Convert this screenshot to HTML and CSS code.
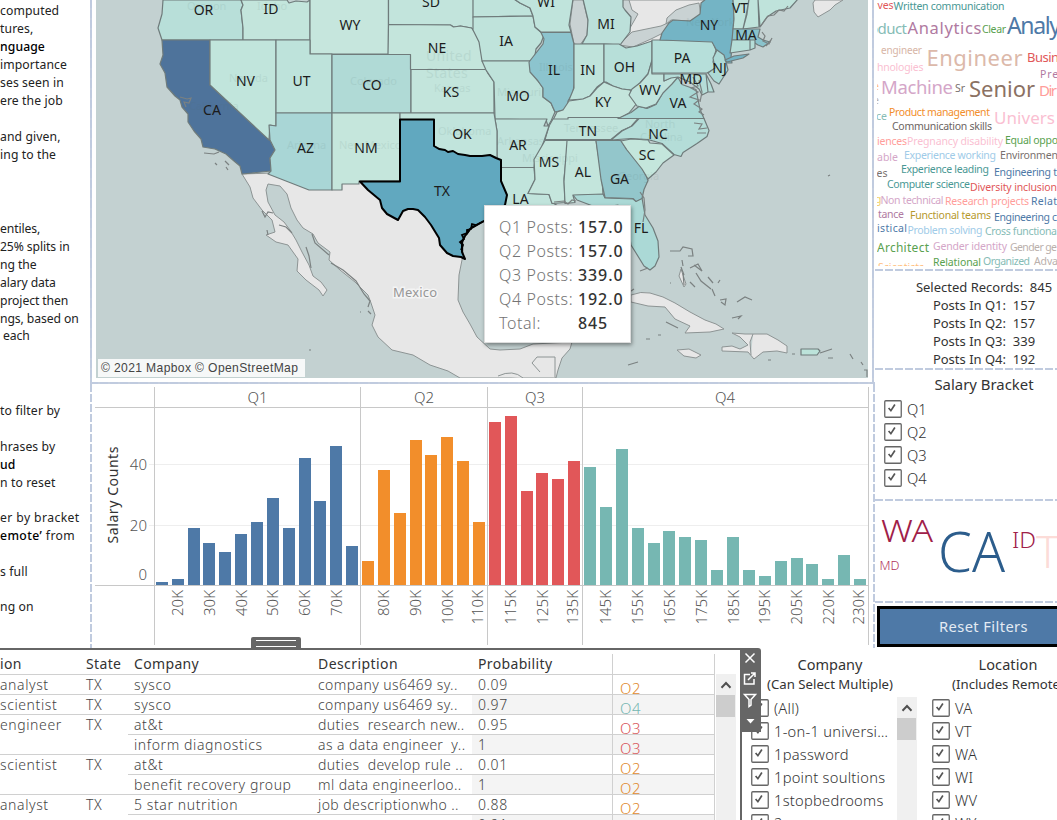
FILE: index.html
```html
<!DOCTYPE html>
<html lang="en">
<head>
<meta charset="utf-8">
<title>Job Posts Dashboard</title>
<link rel="stylesheet" href="styles.css">
</head>
<body>
<svg class="defs" width="0" height="0" aria-hidden="true">
  <symbol id="box" viewBox="0 0 18 18"><rect x=".75" y=".75" width="16.5" height="16.5" rx="1" fill="#fff" stroke="#666" stroke-width="1.3"/><path d="M4.600 8l2.300 2.700 4-6.200" fill="none" stroke="#555" stroke-width="1.7"/></symbol>
  <symbol id="up" viewBox="0 0 12 8"><path d="M1.5 6.7L6 2l4.500 4.700" fill="none" stroke="#505050" stroke-width="2"/></symbol>
</svg>
<div class="dashboard">
  <aside class="notes">
    <p>computed<br>tures,<br><b>nguage</b><br>importance<br>ses seen in<br>ere the job</p>
    <p class="n2">and given,<br>ing to the</p>
    <p class="n3">entiles,<br>25% splits in<br>ng the<br>alary data<br>project then<br>ngs, based on<br>&nbsp;each</p>
    <p class="n4">to filter by</p>
    <p class="n5">hrases by<br><b>ud</b><br>n to reset</p>
    <p class="n5 wide">er by bracket<br><b>emote’</b> from</p>
    <p class="n5">s full</p>
    <p class="n5">ng on</p>
  </aside>

  <main class="center">
    <section class="map-panel">
      <svg class="map" viewBox="96 0 772 378">
        <rect x="96" width="772" height="378" fill="#c3d1d1"/>
        <g class="land">
          <path d="M242 174l8 13 3 11 9 12 10 10 3 12-9 3 10 7 12 3 10 14-1 12 9 9 13 10 4 6 4-6-6-8-8-6-4-11-7-13-6-12-6-10-6-8-9-7-7-13-2-12 2-6 12 2 7 8 4 14 6 12 6 8 10 6 5 9 12 9-1 8 11 10 15 12 13 13 3 8 4 12-3 10 6 12 14 13 21 5 17 10 18 6 12 7h96l2-8 4-12 8-9 2-7-39 2-13 5-20 1-10-1-13-12-7-13-7-12-5-12 1-25 4-20 1-80-130-4z"/>
          <path d="M532 363l5-6h18v21M532 363l8 9M498 376q15-7 25 2"/>
          <path d="M590 0h144v20l-34 25h-96l-17-3z"/>
          <path d="M631 295q10-4 19-2l13 4 12 6 15 9 15 8 11 4 8 5-14 3-25 1 5-7-15-7-10-12-17-1-17-4z"/>
          <path d="M732 333l13 1 8 0 14 0 11 6 9 6v7l-10-2-14 1-9 7-6-7-26-1v-4l10-1 8 3 8-4-8-8zM677 350l12-1 12 6-5 3-12-2zM753 334l-3 8 1 13"/>
          <path d="M813 3l1 9 4 5 12-7 5-5 8-5h-28z"/>
          <path d="M679 276l2-7 2 6 3 9-2 3z"/>
        </g>
        <g class="lake">
          <path d="M573 0l-3 24 4 20 6 1 7-10 1-14-5-21z"/>
          <path d="M615 0l1 11 10 3 4 14 8-14-6-4-3-10z"/>
          <path d="M619 45l13-13 29-6 9-4-7 11-12 6-18 8z"/>
          <path d="M667 18l9-8 13-5 10-2 2 12-11 6-19-1-5 4z"/>
        </g>
        <g class="state">
          <path fill="#b8dfd9" d="M163 0l-1 14-4 14 4 12h81V28l-2-18 2-5-2-5z"/>
          <path fill="#c3e5dc" d="M241 0l2 5-2 5 2 18v12h67V0l-3 2-11-1-7 2-2-3z"/>
          <path fill="#c6e6dd" d="M310-1v55h78.500v-55z"/>
          <path fill="#4e739b" d="M162 40h48v45l60 55 5 10-5 8 1 13-29 3-2-8-6-5-8-7-11-5-12-2-2-8-7-8-6-9v-8l-6-7-2-7-5-4-8-9-2-14-5-9 3-9z"/>
          <path fill="#c1e5dc" d="M210 40h66v86l-6-1-1 15-59-55z"/>
          <path fill="#bee3db" d="M276 40h34v14h22v59h-56z"/>
          <path fill="#b0dad6" d="M332 54.500h79V113h-79z"/>
          <path fill="#a9d6d6" d="M276 113h56v77h-23l-41-16 3-3-1-13 5-8-5-10-1-15 7 1z"/>
          <path fill="#c5e6dc" d="M332 113h68v68h-41v3h-17v6h-10z"/>
          <path fill="#c2e4dc" d="M388.500-1v25.500l62 .5 3 2 7-1 11 2 3 3-1-13v-20z"/>
          <path fill="#bfe3db" d="M473-1v18l60-1-3-8-10-5-6-4z"/>
          <path fill="#c4e5dc" d="M388.500 24.500l62 .5 3 2 7-1 11 2 4 5 4 9 3 13 4 10 3 4.500h-79V54.500h-22.500z"/>
          <path fill="#bfe3db" d="M473 17l60-1 2 11 9 8-3 8-5 6-2 12H482l-3-19-6-12z"/>
          <path fill="#c3e5dc" d="M411 69.500h75l2 4 6 8.500v31h-83z"/>
          <path fill="#bee2da" d="M482 61h48l1 10 7 10 5 7v9l8 6 4 9-4 9-3 5-2-6-51-1-1-37-8-12z"/>
          <path fill="#c0e4dc" d="M514-1l6 4 10 5 3 8 2 11 6 5h30l-2-7 4-26z"/>
          <path fill="#8cc4ce" d="M541 32.500h30l3 11.500v40l-1 9-5 8-1 8-12 3-4-9-8-6v-9l-5-7-8-9-1-10 7-9 7-9 1-5z"/>
          <path fill="#bce0da" d="M583-1l5 21-1 15-5 9h24l14 1 10-13 1-15-6-7-2-3 0-8z"/>
          <path fill="#bfe3db" d="M574 44h30v38l-7 5-7 9-7 3-14 1 5-12z"/>
          <path fill="#b7dfd9" d="M604 44h15l7 4 11-2 15-5v20l-4 13-8 9-8 7-10-1-9-3-7-4h-2z"/>
          <path fill="#c4e5dc" d="M569 101l14-2 7-3 7-8 7-6 9 4 9 3 8 1 7 13-8 10-11 6-65 1 4-8 6-2z"/>
          <path fill="#c0e3db" d="M549 126l4-7h15v-1.500h71l-8 9-9 4-11 9h-66z"/>
          <path fill="#bfe2db" d="M495 119h52l-3 7h5l-8 24-6 10-1 7.500h-33v-7l-4-2V131z"/>
          <path fill="#c1e4dc" d="M494 113h-94v6.500h34V146l11 5 13 4 24 1 8-1 7 3v-27z"/>
          <path fill="#c1e4dc" d="M501 167.500h33l1 12-7 14 21 1 3 8 7 4v18h-59l6-29-6-15z"/>
          <path fill="#c5e6dd" d="M545 140.500h23l-4 38 1 24-13 1-3-9-21-1 7-14-1-20z"/>
          <path fill="#c3e5dc" d="M567 140.500h29l6 38 1 16-30 1 2 7-10 1-1-22z"/>
          <path fill="#abd9d6" d="M573 195l30-1 2 4 28 1 3 2 6-3 3 17 8 13 5 13 1 16-4 9-5 4-6-4-8-13-5-8-3-20-10-20-20 3-21-8z"/>
          <path fill="#93c6cb" d="M596 140.500h25l5 8 13 14 7 13 2 5-4 9-2 9-6 3-3-3-28-1-4-18z"/>
          <path fill="#b4ddd8" d="M611 140l11-9 10-5 7-7.500h65l5 12-2 6-10 7-14 9-2 4-7-2-12-11-14-4-17-1z"/>
          <path fill="#c4e6dc" d="M621 141l10-2 17 1 2 3 12 1 12 11-11 8-7 9-8 7-6-10-15-19z"/>
          <path fill="#a9d8d5" d="M618 118.500l13-6 8-6 8 2 9-4 7-12 8-11 7-4 4 7 14 5 4 20 4 9z"/>
          <path fill="#c0e3dc" d="M652 60v14h12v7l8-4 6 0-6 7-9 9-7 11-10 4-9-2-8-11 3-6 8-6 8-9z"/>
          <path fill="#b5ddd8" d="M664 74h42l2 18-6 3-3-6-9-7-12-5-7 1-7 3zM706 74l2 18h6l-3-8z"/>
          <path fill="#b6dfda" d="M652 40h60l4 10-3 12 3 6-9 5h-55z"/>
          <path fill="#74b4c5" d="M660 40l2-7 7-10 4-3 17 1 10-7 1-11 5-4h27l1 20-3 39 1 5-7 0-1-7-7-5-5-9z"/>
          <path fill="#addad6" d="M717 50l7 5 2 7 2 8-9 14-5-3-6-8 7-5-2-10z"/>
          <path fill="#bfe3db" d="M733-1l1 20-1 10h10l3-13 3-17zM749-1l-2 15-4 15 16-2-1-28zM758-1l2 28 7-10 9-6 14-3 8-9z"/>
          <path fill="#8ac3cc" d="M733 29h27l-2 8 5 3 7 2-7 5-5-2-8-5h-18z"/>
          <path fill="#b6ded8" d="M732 40h18v10l-20 3zM750 40h5v8l-5 2z"/>
          <path fill="#74b4c5" d="M725 60l9-4 15-2-6 4-16 4z"/>
          <path fill="#bce3da" d="M801 349h17l2 2-3 4h-16z"/>
        </g>
        <g class="coast">
          <path d="M180 97l7 2 4-1-2 5-5-1 2 5M204 153l10 1 5-2M215 163l2 2M225 161l4 4M226 167l2 3M693 77l5 9-7 2 7 4-8 5 9 3-5 4 8 5-3 3 5 3M699 80l3 12-2 10M694 123l8 1-3 5 8-1M697 133l9 0M762 32l3 4-2 5 6 3 3-6M771 40l-5 6M760 27l8-11 6-1 5-5 5 1 4-5M554 202l10-1 4 3 4-4 4 1M640 192l4 6 1 12-2 12M628 293l6-4M262 211l3 6 3-5 5 1M312 234l3 9 14 12M331 263l12 7 13 11 8 13 6 7-2 6M279 225l7 2 6 6M306 247l3 9 2 12M368 311l3 3M309 350h2M360 312h1M267 230l1 5"/>
          <path d="M670 251l10 0 3-4 9 2 1 7-5 0M682 260l1 6M690 268l8-4 4 7-8-6M696 273l5 8 10 8M708 277l5 6M718 283l2-3M720 300l6-1-1 6-4-3M737 302l8-5 7 3M732 318l9-2-3 3M690 282l5 5M712 289l3 7M666 322l12 6M646 339h4M658 335h3M792 354h3M820 353l12-4M828 358h5M850 354l3 5M861 362l2 3M864 370h3v7M681 267l3 8M683 273l1 12M828 176l2-1M640 271l8-3M670 283h1M768 360h3M628 365l10-3"/>
        </g>
        <g class="ghost"><text x="187" y="10">Oregon</text><text x="257" y="10">Idaho</text><text x="229" y="82">Nevada</text><text x="189" y="110">California</text><text x="287" y="149">Arizona</text><text x="350" y="85">Colorado</text><text x="339" y="149">New Mexico</text><text x="434" y="92">Kansas</text><text x="438" y="135">Oklahoma</text><text x="497" y="145">Arkansas</text><text x="522" y="162">Mississippi</text><text x="539" y="71">Illinois</text><text x="564" y="132">Tennessee</text><text x="686" y="26">New York</text><text x="645" y="128">North</text><text x="640" y="141">Carolina</text><text x="497" y="96">Missouri</text><text x="618" y="180">Georgia</text><text x="426" y="61" class="country">United</text><text x="426" y="78" class="country">States</text></g>
        <path class="texas" d="M400 119.500H434V146L439 149 445 150 448 152 453 151 458 154 465 155 470 156 482 156 490 155 496 158 501 160V181L504 188 507 195 505 205 495 214 484 221 470 229 465 236 462 242 462 252 465 259 461 257 453 256 447 253 440 245 439 238 431 225 425 217 418 210 413 209 408 209 403 211 398 220 387 214 382 208 380 200 368 190 360 181.500H400z"/>
        <path class="bay" d="M484 221l-8 4-4-1-1 5-4 1 0 3-5 2 2 4-4 3 3 3-2 5M480 223l-9 5-5 7"/>
        <text class="mexico" x="393" y="296.500" textLength="44">Mexico</text>
        <g class="abbr">
          <text x="203.500" y="15">OR</text><text x="271" y="14">ID</text><text x="350" y="29.500">WY</text><text x="431" y="7">SD</text><text x="546" y="7">WI</text><text x="606" y="28.500">MI</text><text x="709" y="29.500">NY</text><text x="740" y="12.500">VT</text><text x="746" y="39.500">MA</text>
          <text x="437" y="53">NE</text><text x="506" y="46">IA</text><text x="554" y="75">IL</text><text x="588" y="75">IN</text><text x="624.500" y="72">OH</text><text x="682" y="63">PA</text><text x="719.500" y="73">NJ</text><text x="691" y="84">MD</text>
          <text x="245.500" y="86">NV</text><text x="301.500" y="86">UT</text><text x="372" y="90">CO</text><text x="451" y="97">KS</text><text x="518" y="101">MO</text><text x="603" y="107">KY</text><text x="650" y="95">WV</text><text x="678" y="108">VA</text>
          <text x="212" y="115">CA</text><text x="305.500" y="153">AZ</text><text x="366" y="153">NM</text><text x="462" y="139">OK</text><text x="518" y="150">AR</text><text x="588" y="136">TN</text><text x="658" y="139">NC</text><text x="647" y="160">SC</text>
          <text x="549" y="167">MS</text><text x="583" y="177">AL</text><text x="619.500" y="184">GA</text><text x="442" y="196">TX</text><text x="520.500" y="204">LA</text><text x="641" y="232.500">FL</text>
        </g>
      </svg>
      <div class="credit">© 2021 Mapbox © OpenStreetMap</div>
      <dl class="tooltip">
        <dt>Q1 Posts:</dt><dd>157.0</dd>
        <dt>Q2 Posts:</dt><dd>157.0</dd>
        <dt>Q3 Posts:</dt><dd>339.0</dd>
        <dt>Q4 Posts:</dt><dd>192.0</dd>
        <dt>Total:</dt><dd>845</dd>
      </dl>
    </section>
    <section class="chart-panel">
      <svg class="chart" viewBox="92 385 781 263">
        <path d="M149 464.500H868M149 525.500H868" stroke="#eee"/>
        <path fill="#4e79a7" d="M156 585v-3h12v3zM172 585v-6h12v6zM188 585v-57h12v57zM203 585v-42h12v42zM219 585v-33h12v33zM235 585v-51h12v51zM251 585v-63h12v63zM267 585v-87h12v87zM283 585v-57h12v57zM299 585V458h12v127zM314 585v-84h12v84zM330 585V446h12v139zM346 585v-39h12v39z"/>
        <path fill="#f28e2b" d="M362 585v-24h12v24zM378 585V470h12v115zM394 585v-72h12v72zM410 585V440h12v145zM425 585V455h12v130zM441 585V437h12v148zM457 585V461h12v124zM473 585v-63h12v63z"/>
        <path fill="#e15759" d="M489 585V422h12v163zM505 585V416h12v169zM521 585v-94h12v94zM536 585V473h12v112zM552 585V479h12v106zM568 585V461h12v124z"/>
        <path fill="#76b7b2" d="M584 585V467h12v118zM600 585v-78h12v78zM616 585V449h12v136zM632 585v-57h12v57zM648 585v-42h12v42zM663 585v-54h12v54zM679 585v-48h12v48zM695 585v-45h12v45zM711 585v-15h12v15zM727 585v-48h12v48zM743 585v-15h12v15zM759 585v-9h12v9zM775 585v-24h12v24zM791 585v-27h12v27zM806 585v-21h12v21zM822 585v-6h12v6zM838 585v-30h12v30zM854 585v-6h12v6z"/>
        <path d="M95 407.500H869M95 585.500H869M154.500 387V645M360.500 387V645M487.500 387V645M582.500 387V645M868.500 387V645" stroke="#c8c8c8"/>
        <g class="quarter"><text x="257.500" y="403">Q1</text><text x="424" y="403">Q2</text><text x="535" y="403">Q3</text><text x="725" y="403">Q4</text></g>
        <g class="ytick"><text x="147" y="470">40</text><text x="147" y="531">20</text><text x="147" y="580">0</text></g>
        <text class="ytitle" transform="translate(118 495) rotate(-90)" text-anchor="middle" textLength="97">Salary Counts</text>
        <g class="xtick">
          <text transform="translate(183 590) rotate(-90)">20K</text><text transform="translate(215 590) rotate(-90)">30K</text><text transform="translate(247 590) rotate(-90)">40K</text><text transform="translate(278 590) rotate(-90)">50K</text><text transform="translate(310 590) rotate(-90)">60K</text><text transform="translate(342 590) rotate(-90)">70K</text>
          <text transform="translate(389 590) rotate(-90)">80K</text><text transform="translate(421 590) rotate(-90)">90K</text><text transform="translate(453 590) rotate(-90)">100K</text><text transform="translate(483 590) rotate(-90)">110K</text>
          <text transform="translate(516 590) rotate(-90)">115K</text><text transform="translate(548 590) rotate(-90)">125K</text><text transform="translate(578 590) rotate(-90)">135K</text>
          <text transform="translate(611 590) rotate(-90)">145K</text><text transform="translate(643 590) rotate(-90)">155K</text><text transform="translate(675 590) rotate(-90)">165K</text><text transform="translate(707 590) rotate(-90)">175K</text><text transform="translate(739 590) rotate(-90)">185K</text><text transform="translate(770 590) rotate(-90)">195K</text><text transform="translate(802 590) rotate(-90)">205K</text><text transform="translate(834 590) rotate(-90)">220K</text><text transform="translate(864 590) rotate(-90)">230K</text>
        </g>
      </svg>
    </section>
  </main>

  <aside class="side">
    <svg class="words" viewBox="877 0 180 269">
      <g font-size="10.500">
        <text x="877.500" y="9" fill="#e15759" textLength="16">ves</text><text x="893.500" y="10" fill="#499894" textLength="111">Written communication</text>
        <text x="869" y="33.500" font-size="15" fill="#86bcb6" textLength="38">oduct</text><text x="907.500" y="34" font-size="16.500" fill="#b07aa1" textLength="74">Analytics</text><text x="982" y="33" fill="#59a14f" textLength="24">Clear</text><text x="1007" y="33.500" font-size="23" fill="#4e79a7" textLength="54">Analy</text>
        <text x="881" y="53.500" font-size="10" fill="#d7b5a6" textLength="41">engineer</text><text x="870" y="53.500" fill="#d7b5a6">a</text><text x="926.500" y="66" font-size="22" fill="#dcb9aa" textLength="96">Engineer</text><text x="1027" y="62" font-size="13" fill="#e15759" textLength="39">Busine</text>
        <text x="877" y="70.500" fill="#fabfd2" textLength="46.500">hnologies</text><text x="1040" y="77.500" fill="#b07aa1" textLength="24">Pres</text>
        <text x="873" y="90" fill="#ffbe7d">e</text><text x="881" y="93.500" font-size="18.500" fill="#d4a6c8" textLength="72">Machine</text><text x="955" y="92" fill="#79706e" textLength="10">Sr</text><text x="969" y="97" font-size="22" fill="#8b7163" textLength="66">Senior</text><text x="1039" y="96" font-size="15" fill="#ff9d9a" textLength="18">Dir</text>
        <text x="873" y="104" fill="#bab0ac">e</text><text x="876" y="119.500" fill="#86bcb6">ce</text><text x="889" y="115.500" fill="#f28e2b" textLength="101">Product management</text><text x="994" y="124" font-size="17" fill="#fabfd2" textLength="61">Univers</text>
        <text x="892" y="129.500" fill="#6b6462" textLength="100">Communication skills</text>
        <text x="877" y="144.500" fill="#ff9d9a" textLength="30">iences</text><text x="907" y="144.500" fill="#fabfd2" textLength="96">Pregnancy disability</text><text x="1005" y="143.500" fill="#59a14f" textLength="53">Equal oppo</text>
        <text x="877" y="161" fill="#d4a6c8" textLength="21">able</text><text x="904" y="158.500" fill="#a0cbe8" textLength="92">Experience working</text><text x="1000" y="158.500" fill="#79706e" textLength="58">Environmen</text>
        <text x="876.500" y="176.500" fill="#79706e">es</text><text x="901" y="172.500" fill="#499894" textLength="88">Experience leading</text><text x="994" y="175.500" fill="#4e79a7" textLength="63">Engineering t</text>
        <text x="887" y="187.500" fill="#499894" textLength="83">Computer science</text><text x="970" y="190.500" fill="#e15759" textLength="87">Diversity inclusion</text>
        <text x="875" y="203" fill="#f1ce63">g</text><text x="880.500" y="203.500" fill="#d4a6c8" textLength="63">Non technical</text><text x="945" y="204.500" fill="#ff9d9a" textLength="84">Research projects</text><text x="1031" y="204.500" fill="#4e79a7" textLength="26">Relat</text>
        <text x="878" y="217.500" fill="#b07aa1" textLength="26">tance</text><text x="910" y="218.500" fill="#b6992d" textLength="81">Functional teams</text><text x="994" y="220.500" fill="#4e79a7" textLength="63">Engineering c</text>
        <text x="877" y="231.500" fill="#4e79a7" textLength="30">istical</text><text x="907.500" y="234" fill="#a0cbe8" textLength="75">Problem solving</text><text x="985" y="234.500" fill="#86bcb6" textLength="72">Cross functiona</text>
        <text x="877" y="252" font-size="12" fill="#59a14f" textLength="52">Architect</text><text x="933" y="249.500" fill="#d4a6c8" textLength="74">Gender identity</text><text x="1010" y="250.500" fill="#bab0ac" textLength="47">Gender ge</text>
        <svg x="877" y="261" width="50" height="5"><text x="1" y="10" fill="#ffbe7d" textLength="46">Scientists</text></svg>
        <text x="933" y="265.500" fill="#59a14f" textLength="48">Relational</text><text x="983" y="264.500" fill="#86bcb6" textLength="47">Organized</text><text x="1034" y="264.500" fill="#bab0ac" textLength="24">Adva</text>
      </g>
    </svg>
    <div class="records">
      <div>Selected Records:&nbsp; 845</div><div>Posts In Q1:&nbsp; 157</div><div>Posts In Q2:&nbsp; 157</div><div>Posts In Q3:&nbsp; 339</div><div>Posts In Q4:&nbsp; 192</div>
    </div>
    <div class="bracket">
      <h2>Salary Bracket</h2>
      <label><svg><use href="#box"/></svg>Q1</label>
      <label><svg><use href="#box"/></svg>Q2</label>
      <label><svg><use href="#box"/></svg>Q3</label>
      <label><svg><use href="#box"/></svg>Q4</label>
    </div>
    <div class="places-wrap">
      <svg class="places" viewBox="875 501 182 100">
        <text x="881" y="542" font-size="31" fill="#a02048" textLength="52" lengthAdjust="spacingAndGlyphs">WA</text>
        <text x="879.500" y="570" font-size="13" fill="#b03058" textLength="20" lengthAdjust="spacingAndGlyphs">MD</text>
        <text x="938" y="572" font-size="56" fill="#2c5d8c" textLength="67" lengthAdjust="spacingAndGlyphs">CA</text>
        <text x="1012" y="548" font-size="22" fill="#a02048" textLength="24" lengthAdjust="spacingAndGlyphs">ID</text>
        <text x="1036" y="568" font-size="44" fill="#fcdcd8">T</text>
      </svg>
    </div>
    <div class="reset-wrap"><button class="reset">Reset Filters</button></div>
  </aside>
</div>

<div class="lower">
  <section class="details">
    <div class="handle"></div>
    <div class="grid">
      <div class="row head"><span>ion</span><span>State</span><span>Company</span><span>Description</span><span>Probability</span><span></span></div>
      <div class="row"><span>analyst</span><span>TX</span><span>sysco</span><span>company us6469 sy..</span><span>0.09</span><span class="q2">Q2</span></div>
      <div class="row alt"><span>scientist</span><span>TX</span><span>sysco</span><span>company us6469 sy..</span><span>0.97</span><span class="q4">Q4</span></div>
      <div class="row open"><span>engineer</span><span>TX</span><span>at&amp;t</span><span>duties&nbsp; research new..</span><span>0.95</span><span class="q3">Q3</span></div>
      <div class="row alt"><span></span><span></span><span>inform diagnostics</span><span>as a data engineer&nbsp; y..</span><span>1</span><span class="q3">Q3</span></div>
      <div class="row open"><span>scientist</span><span>TX</span><span>at&amp;t</span><span>duties&nbsp; develop rule ..</span><span>0.01</span><span class="q2">Q2</span></div>
      <div class="row alt"><span></span><span></span><span>benefit recovery group</span><span>ml data engineerloo..</span><span>1</span><span class="q2">Q2</span></div>
      <div class="row open"><span>analyst</span><span>TX</span><span>5 star nutrition</span><span>job descriptionwho ..</span><span>0.88</span><span class="q2">Q2</span></div>
      <div class="row alt"><span></span><span></span><span></span><span>&nbsp; &nbsp; &nbsp; &nbsp; &nbsp; &nbsp; &nbsp; &nbsp;.</span><span>0.91</span><span></span></div>
    </div>
    <div class="scroll"><i><svg><use href="#up"/></svg></i><b></b></div>
  </section>
  <section class="filter company">
    <h2>Company</h2><h3>(Can Select Multiple)</h3>
    <label><svg><use href="#box"/></svg>(All)</label>
    <label><svg><use href="#box"/></svg>1-on-1 universi…</label>
    <label><svg><use href="#box"/></svg>1password</label>
    <label><svg><use href="#box"/></svg>1point soultions</label>
    <label><svg><use href="#box"/></svg>1stopbedrooms</label>
    <label><svg><use href="#box"/></svg>2</label>
    <div class="scroll"><i><svg><use href="#up"/></svg></i><b></b></div>
  </section>
  <section class="filter location">
    <h2>Location</h2><h3>(Includes Remote)</h3>
    <label><svg><use href="#box"/></svg>VA</label>
    <label><svg><use href="#box"/></svg>VT</label>
    <label><svg><use href="#box"/></svg>WA</label>
    <label><svg><use href="#box"/></svg>WI</label>
    <label><svg><use href="#box"/></svg>WV</label>
    <label><svg><use href="#box"/></svg>WY</label>
  </section>
  <svg class="toolbar" width="21" height="84" viewBox="740 648 21 84">
    <path d="M740 648h18q3 0 3 3v81h-21z" fill="#666"/>
    <g fill="none" stroke="#fff" stroke-width="1.500">
      <path d="M745.500 653.500l9 9M754.500 653.500l-9 9"/>
      <path d="M750 674.500h-5.500v9.500h9.500v-5M748 680l6.500-6.500M751 673h4v4"/>
      <path d="M744.500 694.500h11l-4.500 5v5.500l-2 1.500v-7z"/>
    </g>
    <path d="M746.500 719h8l-4 4.500z" fill="#fff"/>
  </svg>
</div>
</body>
</html>
```
FILE: styles.css
```css
* { box-sizing: border-box; }
html, body { height: 100%; }
body {
  --dash: #c0cbdf;
  --dash-x: repeating-linear-gradient(90deg, var(--dash) 0 8px, transparent 8px 10px);
  --dash-y: repeating-linear-gradient(180deg, var(--dash) 0 8px, transparent 8px 10px);
  margin: 0;
  width: 1057px;
  height: 820px;
  overflow: hidden;
  background: #fff;
  color: #333;
  font-family: "Noto Sans", "Open Sans", sans-serif;
}
.defs { position: absolute; }
svg { display: block; flex: none; }
h2, h3, p, dl, dd { margin: 0; font-weight: 400; }

.dashboard {
  display: grid;
  grid-template-columns: 90px 785px 182px;
  height: 648px;
}

/* explanatory text, scrolled off to the left */
.notes { overflow: hidden; white-space: nowrap; padding-top: 2px; font-size: 12.2px; line-height: 18px; color: #222; }
.notes b { font-weight: 500; color: #000; }
.notes p { letter-spacing: .1px; }
.notes p.n2 { margin-top: 18px; }
.notes p.n3 { margin-top: 56px; line-height: 17.900px; letter-spacing: -.1px; }
.notes p.n4 { margin-top: 57px; letter-spacing: .15px; }
.notes p.n5 { margin-top: 17.500px; }
.notes p.wide { letter-spacing: .4px; }

.center { display: grid; grid-template-rows: 384px 264px; }
.map-panel {
  --dash: #aab8ce;
  position: relative;
  padding-left: 6px;
  background:
    var(--dash-y) 0 0 / 2px 100% no-repeat,
    var(--dash-y) 782px 0 / 2px 100% no-repeat,
    var(--dash-x) 0 382px / 100% 2px no-repeat,
    linear-gradient(#c6cfde, #c6cfde) 0 0 / 2px 100% no-repeat,
    linear-gradient(#c6cfde, #c6cfde) 782px 0 / 2px 100% no-repeat,
    linear-gradient(#c6cfde, #c6cfde) 0 382px / 784px 2px no-repeat;
}
.map { width: 772px; height: 378px; }
.land path { fill: #e7e7e7; stroke: #8d9494; stroke-width: 1; stroke-linejoin: round; }
.lake path { fill: #c9d2d3; stroke: #8d9494; stroke-width: 1; }
.state path { stroke: #6f7b7b; stroke-width: 1.2; stroke-linejoin: round; }
.coast path { fill: none; stroke: #7b8181; stroke-width: 1.2; }
.texas { fill: #61a8bf; stroke: #000; stroke-width: 2; stroke-linejoin: round; }
.bay { fill: none; stroke: #000; stroke-width: 1.8; }
.ghost { font-size: 11px; fill: #50706c; opacity: .1; }
.ghost .country { font-size: 14px; letter-spacing: .3px; }
.mexico { font-size: 13px; fill: #969696; stroke: #f4f4f4; stroke-width: 3px; paint-order: stroke; }
.abbr { font-size: 14px; fill: #1c1c1c; text-anchor: middle; }
.credit {
  position: absolute; left: 8px; top: 359px;
  width: 207px; height: 18px; padding-left: 3px;
  background: rgba(255,255,255,.85);
  font: 12.1px/18px "Liberation Sans", Arial, sans-serif;
  letter-spacing: .37px;
  white-space: nowrap; color: #444;
}
.tooltip {
  position: absolute; left: 394px; top: 205px;
  width: 147px; height: 138px; padding: 9px 0 0 14px;
  display: grid; grid-template-columns: 79px 1fr; grid-auto-rows: 24px;
  background: #fff; border: 1px solid #ddd;
  box-shadow: 1px 2px 4px rgba(0,0,0,.4);
  font-size: 16px; line-height: 24px; white-space: nowrap;
}
.tooltip dt { color: #747474; font-weight: 300; letter-spacing: .6px; }
.tooltip dd { color: #333; font-weight: 500; letter-spacing: .9px; }

.chart-panel { display: flex; padding: 1px 2px; background: var(--dash-y) 0 0 / 2px 100% no-repeat, var(--dash-y) 783px 0 / 2px 100% no-repeat; }
.chart { width: 781px; height: 263px; }
.quarter, .ytick, .xtick { font-size: 15px; font-weight: 300; fill: #555; }
.quarter { text-anchor: middle; }
.ytick, .xtick { text-anchor: end; }
.ytitle { font-size: 14px; fill: #333; }

.side { display: grid; grid-template-rows: 269px 99px 131px 102px 47px; overflow: hidden; }
.words { width: 180px; height: 269px; margin-left: 2px; overflow: hidden; }
.records, .bracket, .places-wrap, .reset-wrap { background: var(--dash-x) 0 0 / 100% 2px no-repeat; }
.records { padding: 9px 0 0; width: 218px; font-size: 13px; line-height: 18px; text-align: center; white-space: nowrap; }
.bracket { padding-top: 6px; }
.bracket h2 { width: 218px; text-align: center; font-size: 14.9px; line-height: 20px; margin-bottom: 3px; }
label { display: flex; align-items: center; gap: 6px; height: 23px; font-size: 14.7px; font-weight: 300; color: #333; white-space: nowrap; }
label svg { width: 18px; height: 18px; }
.bracket label { padding-left: 8.500px; gap: 5.500px; }
.places-wrap { padding-top: 2px; }
.places { width: 182px; height: 100px; font-weight: 300; }
.reset-wrap { padding: 5px 0 0 2px; }
.reset {
  display: block; width: 216px; height: 41px; padding: 0 3px 2px 0;
  border: 3px solid #000; background: #4e79a7; color: #e4ebf3;
  font: 14.7px "Noto Sans", sans-serif; letter-spacing: .4px;
}

.lower { position: relative; display: grid; grid-template-columns: 742px 176px 139px; height: 172px; background: #fff; }
.details { position: relative; display: flex; height: 172px; border-top: 2px solid #666; border-right: 2px solid #666; background: #fff; }
.handle {
  position: absolute; left: 251px; top: -13px; width: 50px; height: 11px;
  background: #666; border-radius: 2px 2px 0 0;
}
.handle::after { content: ""; position: absolute; left: 5px; right: 5px; top: 3px; height: 5px; border: solid #fff; border-width: 1px 0; }
.grid { width: 715px; height: 170px; padding-top: 4px; overflow: hidden; }
.row { display: grid; grid-template-columns: 80px 48px 184px 160px 141px 102px; height: 20px; font-size: 14px; line-height: 20px; letter-spacing: .6px; font-weight: 300; color: #444; white-space: nowrap; }
.row span { border-bottom: 1px solid #d0d0d0; overflow: hidden; }
.row span:nth-child(n+2) { padding-left: 6px; }
.row span:nth-child(4) { letter-spacing: .42px; }
.row span:nth-child(n+5) { border-right: 1px solid #d0d0d0; }
.row.head { height: 21px; line-height: 20px; font-weight: 400; letter-spacing: .35px; color: #333; }
.row.open span:nth-child(-n+2) { border-bottom-color: transparent; }
.row.alt span:nth-child(n+5) { background: #f4f4f4; }
.row span:nth-child(6) { padding-left: 7px; line-height: 27px; font-size: 14.9px; }
.row .q2 { color: #e28a2e; } .row .q3 { color: #d9565a; } .row .q4 { color: #76b7b2; }
.scroll { width: 20px; background: #f0f0f0; }
.scroll i { display: grid; place-items: center; height: 21px; }
.scroll i svg { width: 12px; height: 8px; }
.scroll b { display: block; width: 19px; height: 22px; background: #cdcdcd; }
.details > .scroll { margin: 24px 0 0 1px; }

.filter { position: relative; height: 172px; overflow: hidden; }
.filter h2 { text-align: center; font-size: 14.5px; line-height: 20px; margin-top: 6px; }
.filter h3 { text-align: center; font-size: 13.2px; line-height: 20px; white-space: nowrap; margin-bottom: 2px; }
.filter label { letter-spacing: .25px; }
.company label { padding-left: 9px; gap: 5px; }
.company > .scroll { position: absolute; left: 155px; top: 49px; height: 130px; }
.location { width: 180px; }
.location h2 { padding-right: 0; letter-spacing: .1px; }
.location label { padding-left: 14px; gap: 5px; }
.toolbar { position: absolute; left: 740px; top: 0; }
```
